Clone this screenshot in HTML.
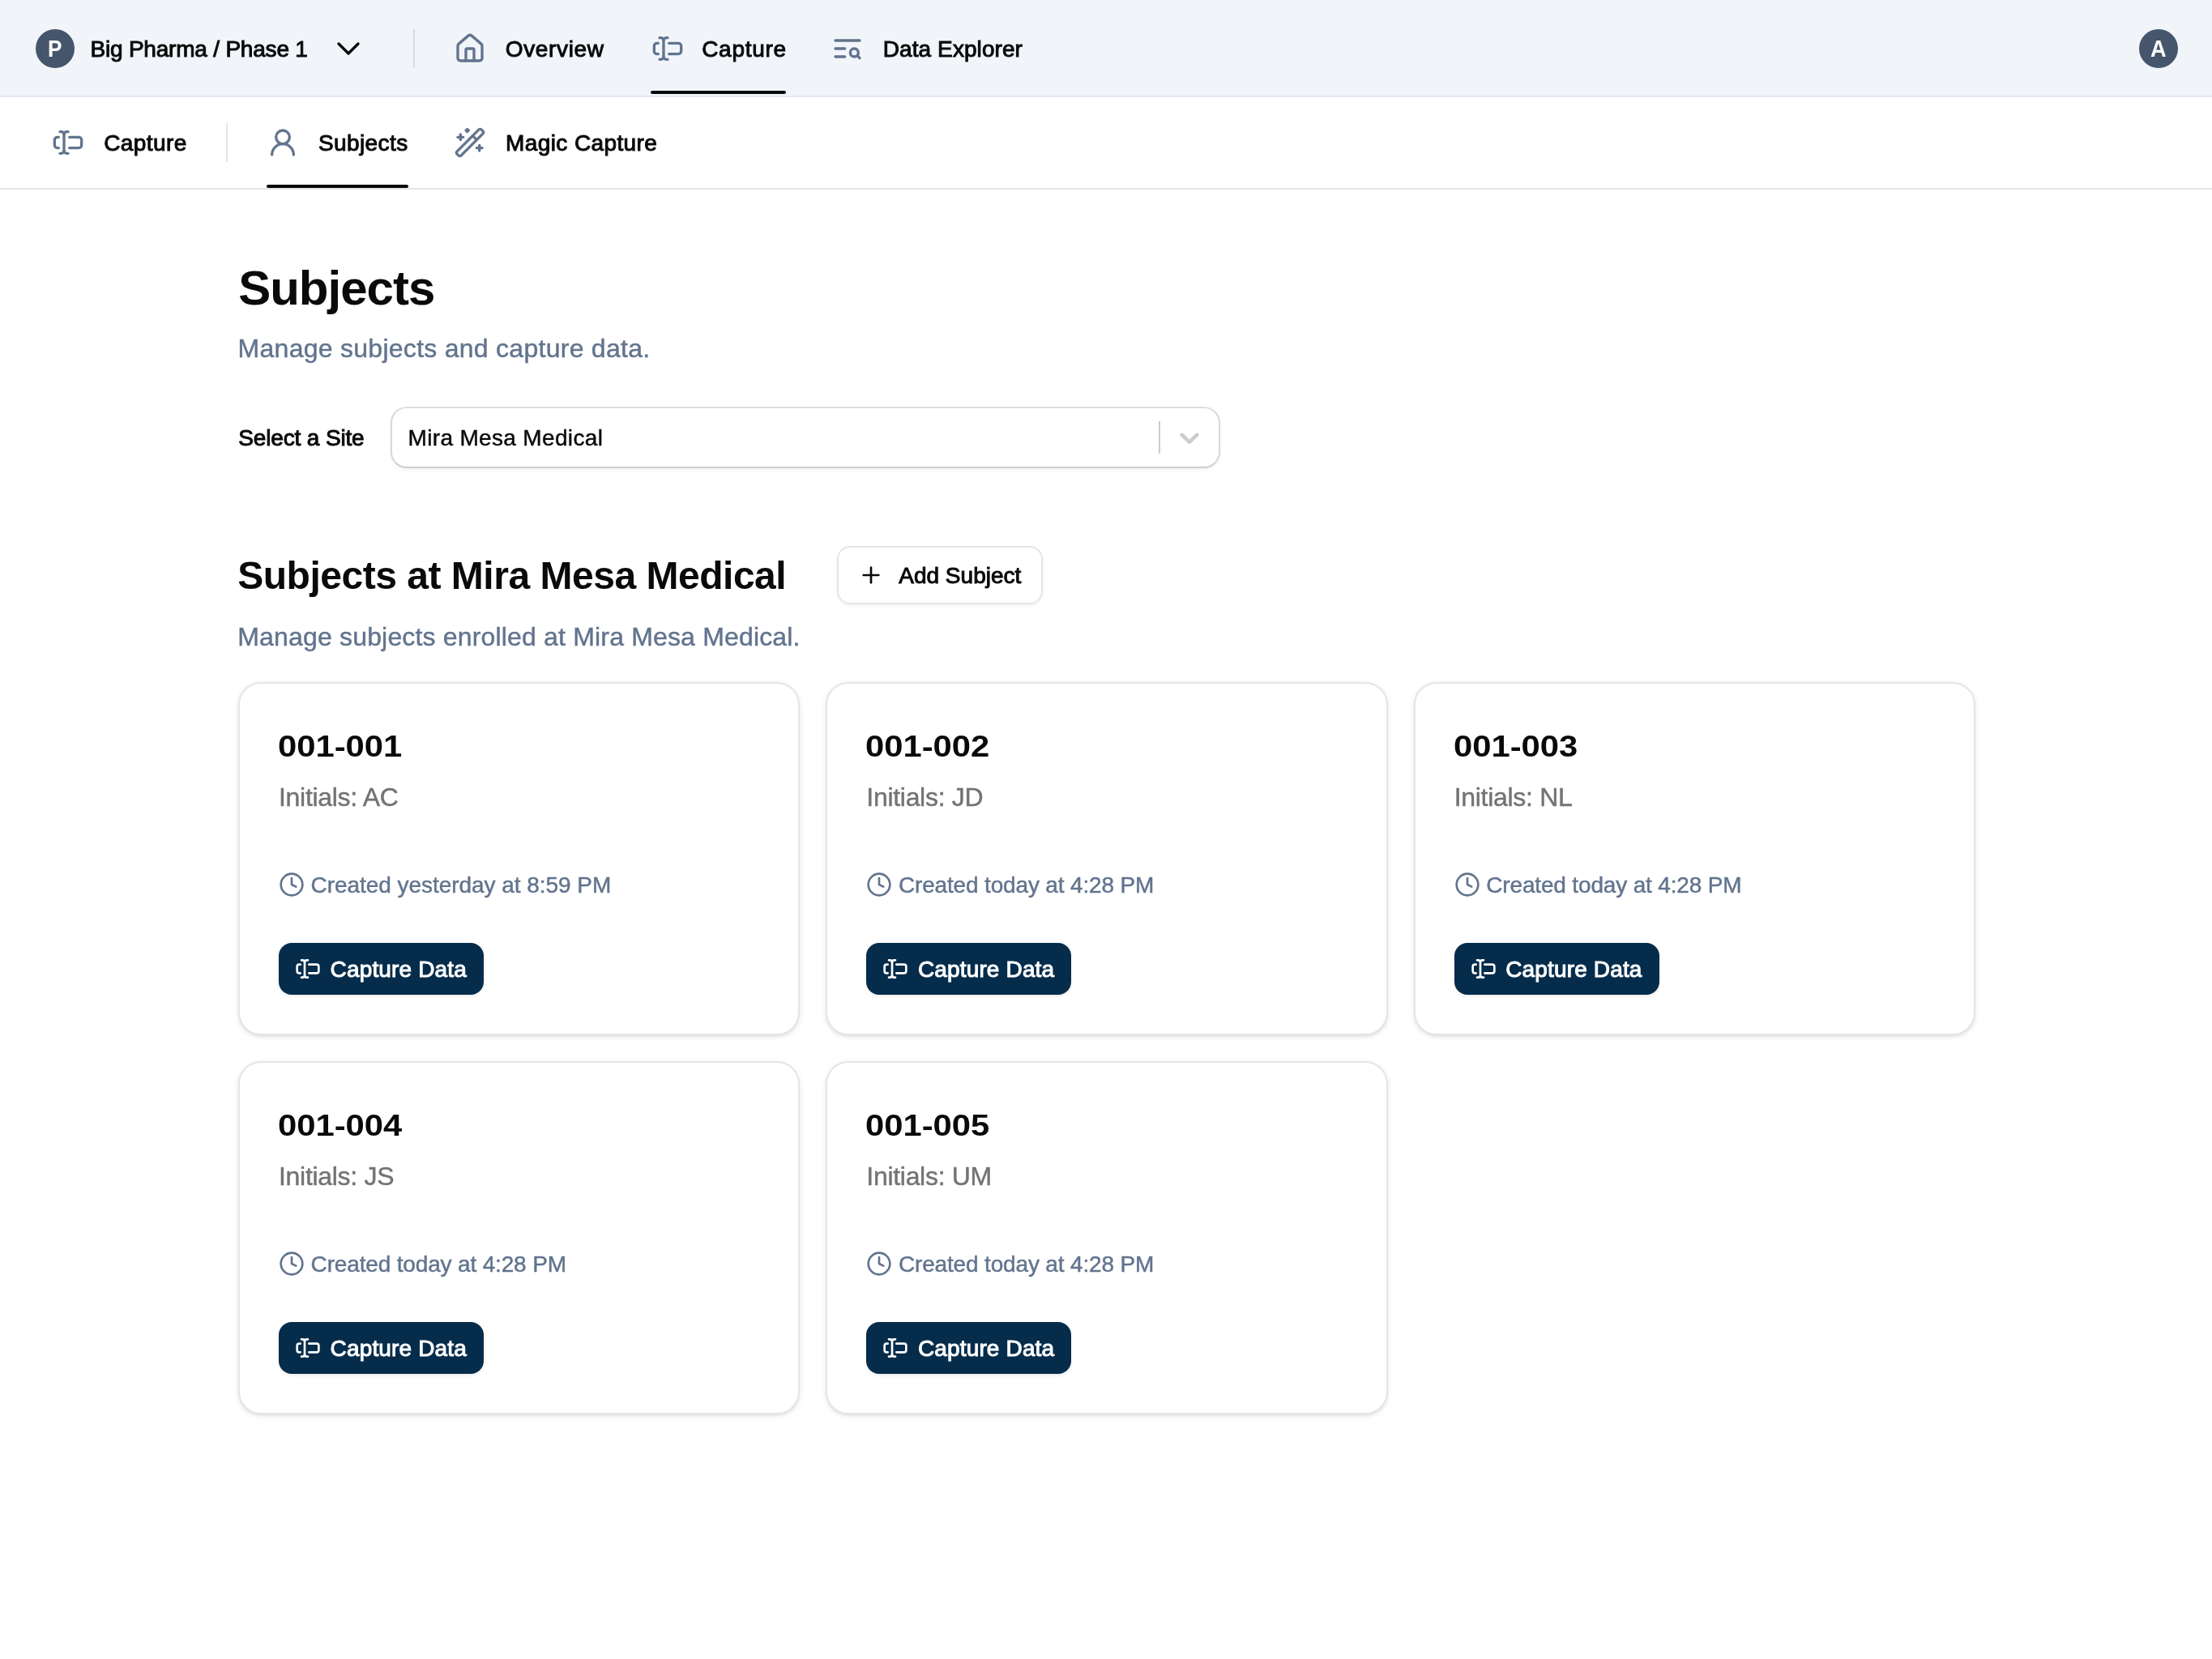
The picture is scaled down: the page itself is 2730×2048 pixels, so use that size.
<!DOCTYPE html>
<html lang="en"><head><meta charset="utf-8"><title>Subjects</title>
<style>
*{box-sizing:border-box;margin:0;padding:0}
html,body{width:2730px;height:2048px;overflow:hidden;background:#fff}
body{position:relative;font-family:"Liberation Sans",sans-serif;color:#0a0a0a}
.abs,.t,.ic{position:absolute}
.t{white-space:nowrap;line-height:1;display:block}
.ic{display:block;overflow:visible}
.m{-webkit-text-stroke:1px currentColor}
.r{-webkit-text-stroke:0.45px currentColor}
.b{font-weight:700}
h1,h2,h3,p,label{font-weight:400}
button{border:0;background:none;font:inherit;color:inherit;text-align:left;cursor:pointer;overflow:visible}
.sl{color:#62748e}
.gr{color:#737373}
.w{color:#fff}
#hdr{left:0;top:0;width:2730px;height:120px;background:#f1f5f9;border-bottom:2px solid #e2e8f0}
#sub{left:0;top:120px;width:2730px;height:114px;background:#fff;border-bottom:2px solid #e5e5e5}
.av{width:48px;height:48px;border-radius:50%;background:#45556c}
.ul{height:4px;border-radius:2px;background:#09090b}
.vd{width:2px;height:48px}
.card{width:693.33px;height:436px;border:2px solid #e5e5e5;border-radius:28px;background:#fff;box-shadow:0 2px 6px 0 rgba(0,0,0,.1),0 2px 4px -2px rgba(0,0,0,.1)}
.btn{left:48px;top:320px;width:253px;height:64px;border-radius:16px;background:#052c4b;box-shadow:0 2px 4px 0 rgba(0,0,0,.08)}
#sel{left:482px;top:502px;width:1024px;height:76px;border:2px solid #dcdcdc;border-color:#dedede #d8d8d8 #cecece #d8d8d8;border-radius:20px;background:#fff;box-shadow:0 2px 4px 0 rgba(0,0,0,.05)}
#add{left:1033px;top:674px;width:253.5px;height:72px;border:2px solid #e5e5e5;border-radius:16px;background:#fff;box-shadow:0 2px 4px 0 rgba(0,0,0,.05)}
#root{position:absolute;left:0;top:0;width:2730px;height:2048px;will-change:transform}
</style></head><body><div id="root">

<header><div id="hdr" class="abs"></div>
<div class="abs av" style="left:44px;top:36px"></div>
<span class="t b w" style="left:58.9px;top:46px;font-size:29px;transform:scaleX(0.9);transform-origin:0 0;">P</span>
<span class="t m" style="left:111.5px;top:47px;font-size:28px;letter-spacing:-0.21px;">Big Pharma / Phase 1</span>
<svg class="ic" style="left:406px;top:36px" width="48" height="48" viewBox="0 0 24 24" fill="none" stroke="#0a0a0a" stroke-width="1.7" stroke-linecap="round" stroke-linejoin="round"><path d="m6 9 6 6 6-6"/></svg>
<div class="abs vd" style="left:510px;top:36px;background:#d8dbe1"></div>
<svg class="ic" style="left:560px;top:40px" width="40" height="40" viewBox="0 0 24 24" fill="none" stroke="#62748e" stroke-width="2" stroke-linecap="round" stroke-linejoin="round"><path d="M15 21v-8a1 1 0 0 0-1-1h-4a1 1 0 0 0-1 1v8"/><path d="M3 10a2 2 0 0 1 .709-1.528l7-5.999a2 2 0 0 1 2.582 0l7 5.999A2 2 0 0 1 21 10v9a2 2 0 0 1-2 2H5a2 2 0 0 1-2-2z"/></svg>
<span class="t m" style="left:623.7px;top:47px;font-size:28px;letter-spacing:0.67px;">Overview</span>
<svg class="ic" style="left:804px;top:40px" width="40" height="40" viewBox="0 0 24 24" fill="none" stroke="#62748e" stroke-width="2" stroke-linecap="round" stroke-linejoin="round"><path d="M12 20h-1a2 2 0 0 1-2-2 2 2 0 0 1-2 2H6"/><path d="M13 8h7a2 2 0 0 1 2 2v4a2 2 0 0 1-2 2h-7"/><path d="M5 16H4a2 2 0 0 1-2-2v-4a2 2 0 0 1 2-2h1"/><path d="M6 4h1a2 2 0 0 1 2 2 2 2 0 0 1 2-2h1"/><path d="M9 6v12"/></svg>
<span class="t m" style="left:866.2px;top:47px;font-size:28px;letter-spacing:0.7px;">Capture</span>
<div class="abs ul" style="left:803px;top:112px;width:167px"></div>
<svg class="ic" style="left:1026px;top:40px" width="40" height="40" viewBox="0 0 24 24" fill="none" stroke="#62748e" stroke-width="2" stroke-linecap="round" stroke-linejoin="round"><path d="M21 6H3"/><path d="M10 12H3"/><path d="M10 18H3"/><circle cx="17" cy="15" r="3"/><path d="m21 19-1.9-1.9"/></svg>
<span class="t m" style="left:1089.8px;top:47px;font-size:28px;letter-spacing:0.08px;">Data Explorer</span>
<div class="abs av" style="left:2640px;top:36px"></div>
<span class="t b w" style="left:2654.1px;top:46px;font-size:29px;transform:scaleX(0.94);transform-origin:0 0;">A</span>
</header><nav><div id="sub" class="abs"></div>
<svg class="ic" style="left:64px;top:156px" width="40" height="40" viewBox="0 0 24 24" fill="none" stroke="#62748e" stroke-width="2" stroke-linecap="round" stroke-linejoin="round"><path d="M12 20h-1a2 2 0 0 1-2-2 2 2 0 0 1-2 2H6"/><path d="M13 8h7a2 2 0 0 1 2 2v4a2 2 0 0 1-2 2h-7"/><path d="M5 16H4a2 2 0 0 1-2-2v-4a2 2 0 0 1 2-2h1"/><path d="M6 4h1a2 2 0 0 1 2 2 2 2 0 0 1 2-2h1"/><path d="M9 6v12"/></svg>
<span class="t m" style="left:128.2px;top:163px;font-size:28px;letter-spacing:0.4px;">Capture</span>
<div class="abs vd" style="left:279px;top:152px;background:#e5e5e5"></div>
<svg class="ic" style="left:329px;top:156px" width="40" height="40" viewBox="0 0 24 24" fill="none" stroke="#62748e" stroke-width="2" stroke-linecap="round" stroke-linejoin="round"><circle cx="12" cy="8" r="5"/><path d="M20 21a8 8 0 0 0-16 0"/></svg>
<span class="t m" style="left:392.9px;top:163px;font-size:28px;letter-spacing:0.42px;">Subjects</span>
<div class="abs ul" style="left:329px;top:228px;width:175px"></div>
<svg class="ic" style="left:560px;top:156px" width="40" height="40" viewBox="0 0 24 24" fill="none" stroke="#62748e" stroke-width="2" stroke-linecap="round" stroke-linejoin="round"><path d="m21.64 3.64-1.28-1.28a1.21 1.21 0 0 0-1.72 0L2.36 18.64a1.21 1.21 0 0 0 0 1.72l1.28 1.28a1.2 1.2 0 0 0 1.72 0L21.64 5.36a1.2 1.2 0 0 0 0-1.72"/><path d="m14 7 3 3"/><path d="M5 6v4"/><path d="M19 14v4"/><path d="M10 2v2"/><path d="M7 8H3"/><path d="M21 16h-4"/><path d="M11 3H9"/></svg>
<span class="t m" style="left:624.1px;top:163px;font-size:28px;letter-spacing:0.39px;">Magic Capture</span>
</nav><main>
<h1 class="t b" style="left:294.2px;top:326px;font-size:60px;letter-spacing:-1.0px;">Subjects</h1>
<p class="t sl r" style="left:293.6px;top:414px;font-size:32px;letter-spacing:0.27px;">Manage subjects and capture data.</p>
<label class="t m" style="left:294.3px;top:527px;font-size:28px;letter-spacing:-0.15px;">Select a Site</label>
<div id="sel" class="abs">
<span class="t r" style="left:19.5px;top:23px;font-size:28px;letter-spacing:0.34px;">Mira Mesa Medical</span>
<div class="abs" style="left:946px;top:16px;width:2px;height:40px;background:#ccc"></div>
<svg class="ic" style="left:964px;top:16px" width="40" height="40" viewBox="0 0 20 20" fill="#ccc"><path d="M4.516 7.548c0.436-0.446 1.043-0.481 1.576 0l3.908 3.747 3.908-3.747c0.533-0.481 1.141-0.446 1.574 0 0.436 0.445 0.408 1.197 0 1.615-0.406 0.418-4.695 4.502-4.695 4.502-0.217 0.223-0.502 0.335-0.787 0.335s-0.57-0.112-0.789-0.335c0 0-4.287-4.084-4.695-4.502s-0.436-1.17 0-1.615z"/></svg>
</div>
<h2 class="t b" style="left:293.2px;top:687px;font-size:48px;letter-spacing:-0.48px;">Subjects at Mira Mesa Medical</h2>
<button type="button" id="add" class="abs">
<svg class="ic" style="left:24px;top:18px" width="32" height="32" viewBox="0 0 24 24" fill="none" stroke="#0a0a0a" stroke-width="2" stroke-linecap="round" stroke-linejoin="round"><path d="M5 12h14"/><path d="M12 5v14"/></svg>
<span class="t m" style="left:74.2px;top:21px;font-size:28px;letter-spacing:0.02px;">Add Subject</span>
</button>
<p class="t sl r" style="left:293.3px;top:770px;font-size:32px;letter-spacing:0.17px;">Manage subjects enrolled at Mira Mesa Medical.</p>
<article class="abs card" style="left:294.00px;top:842px">
<h3 class="t b" style="left:47.1px;top:60px;font-size:36px;transform:scaleX(1.16);transform-origin:0 0;">001-001</h3>
<p class="t gr r" style="left:48.0px;top:124px;font-size:32px;letter-spacing:-0.3px;">Initials: AC</p>
<svg class="ic" style="left:48px;top:232px" width="32" height="32" viewBox="0 0 24 24" fill="none" stroke="#62748e" stroke-width="2" stroke-linecap="round" stroke-linejoin="round"><circle cx="12" cy="12" r="10"/><polyline points="12 6 12 12 16 14"/></svg>
<span class="t sl r" style="left:87.6px;top:235px;font-size:28px;letter-spacing:-0.05px;">Created yesterday at 8:59 PM</span>
<button type="button" class="abs btn">
<svg class="ic" style="left:20px;top:16px" width="32" height="32" viewBox="0 0 24 24" fill="none" stroke="#fff" stroke-width="2" stroke-linecap="round" stroke-linejoin="round"><path d="M12 20h-1a2 2 0 0 1-2-2 2 2 0 0 1-2 2H6"/><path d="M13 8h7a2 2 0 0 1 2 2v4a2 2 0 0 1-2 2h-7"/><path d="M5 16H4a2 2 0 0 1-2-2v-4a2 2 0 0 1 2-2h1"/><path d="M6 4h1a2 2 0 0 1 2 2 2 2 0 0 1 2-2h1"/><path d="M9 6v12"/></svg>
<span class="t m w" style="left:63.6px;top:19px;font-size:28px;letter-spacing:0.15px;">Capture Data</span>
</button></article>
<article class="abs card" style="left:1019.33px;top:842px">
<h3 class="t b" style="left:47.1px;top:60px;font-size:36px;transform:scaleX(1.16);transform-origin:0 0;">001-002</h3>
<p class="t gr r" style="left:48.0px;top:124px;font-size:32px;letter-spacing:-0.3px;">Initials: JD</p>
<svg class="ic" style="left:48px;top:232px" width="32" height="32" viewBox="0 0 24 24" fill="none" stroke="#62748e" stroke-width="2" stroke-linecap="round" stroke-linejoin="round"><circle cx="12" cy="12" r="10"/><polyline points="12 6 12 12 16 14"/></svg>
<span class="t sl r" style="left:87.6px;top:235px;font-size:28px;letter-spacing:-0.16px;">Created today at 4:28 PM</span>
<button type="button" class="abs btn">
<svg class="ic" style="left:20px;top:16px" width="32" height="32" viewBox="0 0 24 24" fill="none" stroke="#fff" stroke-width="2" stroke-linecap="round" stroke-linejoin="round"><path d="M12 20h-1a2 2 0 0 1-2-2 2 2 0 0 1-2 2H6"/><path d="M13 8h7a2 2 0 0 1 2 2v4a2 2 0 0 1-2 2h-7"/><path d="M5 16H4a2 2 0 0 1-2-2v-4a2 2 0 0 1 2-2h1"/><path d="M6 4h1a2 2 0 0 1 2 2 2 2 0 0 1 2-2h1"/><path d="M9 6v12"/></svg>
<span class="t m w" style="left:63.6px;top:19px;font-size:28px;letter-spacing:0.15px;">Capture Data</span>
</button></article>
<article class="abs card" style="left:1744.67px;top:842px">
<h3 class="t b" style="left:47.1px;top:60px;font-size:36px;transform:scaleX(1.16);transform-origin:0 0;">001-003</h3>
<p class="t gr r" style="left:48.0px;top:124px;font-size:32px;letter-spacing:-0.3px;">Initials: NL</p>
<svg class="ic" style="left:48px;top:232px" width="32" height="32" viewBox="0 0 24 24" fill="none" stroke="#62748e" stroke-width="2" stroke-linecap="round" stroke-linejoin="round"><circle cx="12" cy="12" r="10"/><polyline points="12 6 12 12 16 14"/></svg>
<span class="t sl r" style="left:87.6px;top:235px;font-size:28px;letter-spacing:-0.16px;">Created today at 4:28 PM</span>
<button type="button" class="abs btn">
<svg class="ic" style="left:20px;top:16px" width="32" height="32" viewBox="0 0 24 24" fill="none" stroke="#fff" stroke-width="2" stroke-linecap="round" stroke-linejoin="round"><path d="M12 20h-1a2 2 0 0 1-2-2 2 2 0 0 1-2 2H6"/><path d="M13 8h7a2 2 0 0 1 2 2v4a2 2 0 0 1-2 2h-7"/><path d="M5 16H4a2 2 0 0 1-2-2v-4a2 2 0 0 1 2-2h1"/><path d="M6 4h1a2 2 0 0 1 2 2 2 2 0 0 1 2-2h1"/><path d="M9 6v12"/></svg>
<span class="t m w" style="left:63.6px;top:19px;font-size:28px;letter-spacing:0.15px;">Capture Data</span>
</button></article>
<article class="abs card" style="left:294.00px;top:1310px">
<h3 class="t b" style="left:47.1px;top:60px;font-size:36px;transform:scaleX(1.16);transform-origin:0 0;">001-004</h3>
<p class="t gr r" style="left:48.0px;top:124px;font-size:32px;letter-spacing:-0.3px;">Initials: JS</p>
<svg class="ic" style="left:48px;top:232px" width="32" height="32" viewBox="0 0 24 24" fill="none" stroke="#62748e" stroke-width="2" stroke-linecap="round" stroke-linejoin="round"><circle cx="12" cy="12" r="10"/><polyline points="12 6 12 12 16 14"/></svg>
<span class="t sl r" style="left:87.6px;top:235px;font-size:28px;letter-spacing:-0.16px;">Created today at 4:28 PM</span>
<button type="button" class="abs btn">
<svg class="ic" style="left:20px;top:16px" width="32" height="32" viewBox="0 0 24 24" fill="none" stroke="#fff" stroke-width="2" stroke-linecap="round" stroke-linejoin="round"><path d="M12 20h-1a2 2 0 0 1-2-2 2 2 0 0 1-2 2H6"/><path d="M13 8h7a2 2 0 0 1 2 2v4a2 2 0 0 1-2 2h-7"/><path d="M5 16H4a2 2 0 0 1-2-2v-4a2 2 0 0 1 2-2h1"/><path d="M6 4h1a2 2 0 0 1 2 2 2 2 0 0 1 2-2h1"/><path d="M9 6v12"/></svg>
<span class="t m w" style="left:63.6px;top:19px;font-size:28px;letter-spacing:0.15px;">Capture Data</span>
</button></article>
<article class="abs card" style="left:1019.33px;top:1310px">
<h3 class="t b" style="left:47.1px;top:60px;font-size:36px;transform:scaleX(1.16);transform-origin:0 0;">001-005</h3>
<p class="t gr r" style="left:48.0px;top:124px;font-size:32px;letter-spacing:-0.3px;">Initials: UM</p>
<svg class="ic" style="left:48px;top:232px" width="32" height="32" viewBox="0 0 24 24" fill="none" stroke="#62748e" stroke-width="2" stroke-linecap="round" stroke-linejoin="round"><circle cx="12" cy="12" r="10"/><polyline points="12 6 12 12 16 14"/></svg>
<span class="t sl r" style="left:87.6px;top:235px;font-size:28px;letter-spacing:-0.16px;">Created today at 4:28 PM</span>
<button type="button" class="abs btn">
<svg class="ic" style="left:20px;top:16px" width="32" height="32" viewBox="0 0 24 24" fill="none" stroke="#fff" stroke-width="2" stroke-linecap="round" stroke-linejoin="round"><path d="M12 20h-1a2 2 0 0 1-2-2 2 2 0 0 1-2 2H6"/><path d="M13 8h7a2 2 0 0 1 2 2v4a2 2 0 0 1-2 2h-7"/><path d="M5 16H4a2 2 0 0 1-2-2v-4a2 2 0 0 1 2-2h1"/><path d="M6 4h1a2 2 0 0 1 2 2 2 2 0 0 1 2-2h1"/><path d="M9 6v12"/></svg>
<span class="t m w" style="left:63.6px;top:19px;font-size:28px;letter-spacing:0.15px;">Capture Data</span>
</button></article>
</main></div></body></html>
